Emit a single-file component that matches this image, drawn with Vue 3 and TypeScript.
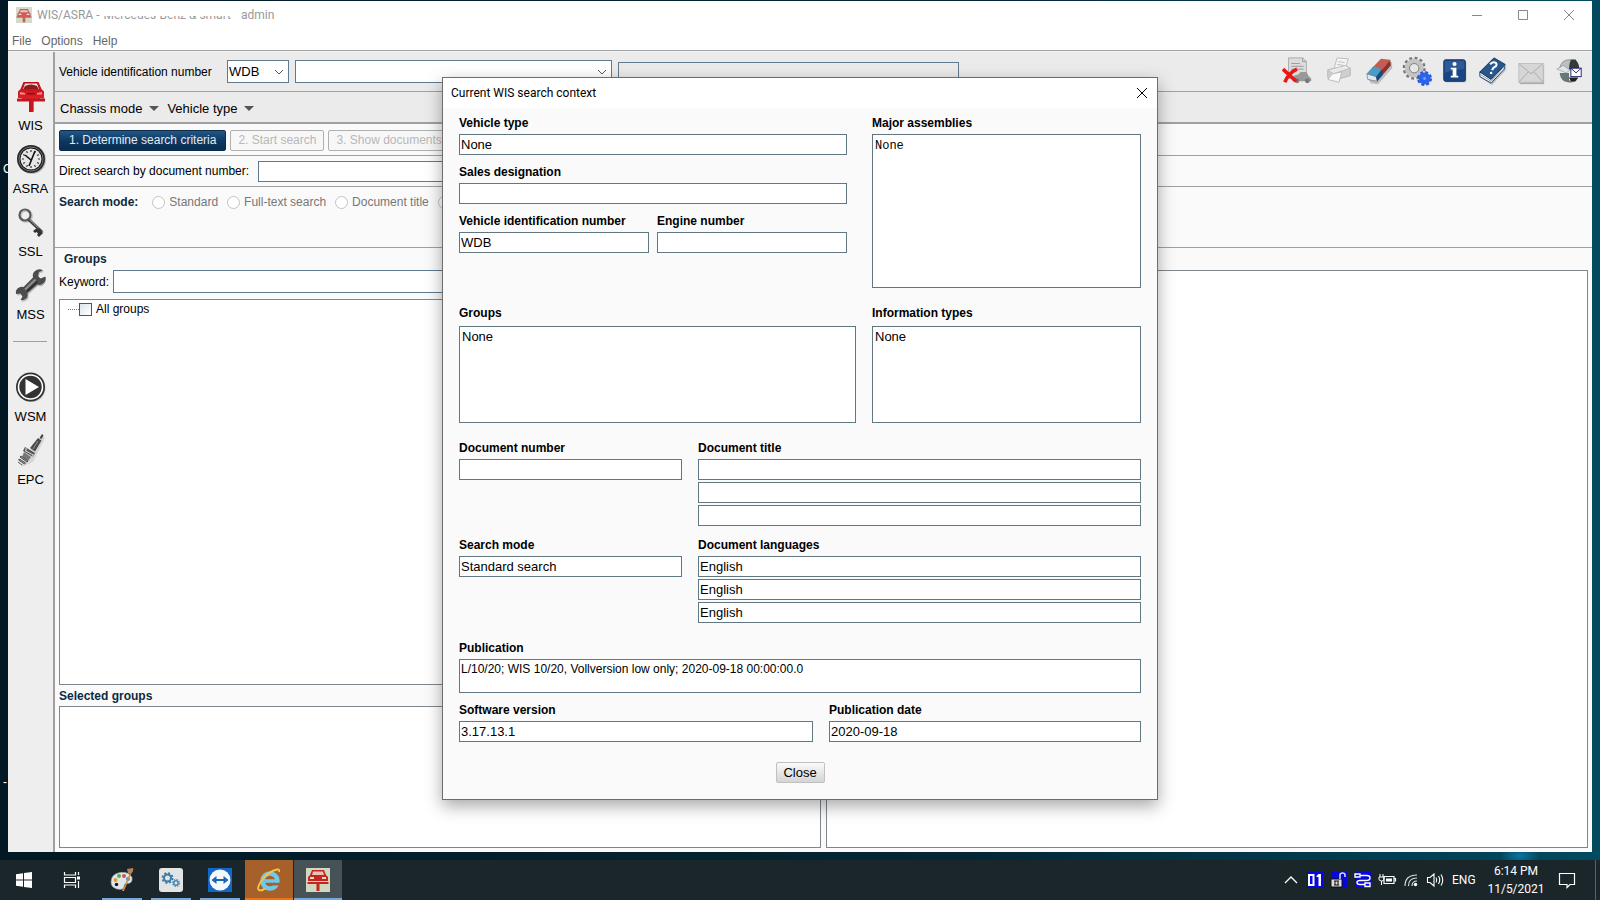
<script setup lang="ts">
import { ref } from 'vue'

const prefix = ref('WDB')
const vin = ref('')
const directSearch = ref('')
const keyword = ref('')
const dialogOpen = ref(true)

const searchModes: string[] = ['Standard', 'Full-text search', 'Document title', 'Document number']
const titles: string[] = ['', '', '']
const languages: string[] = ['English', 'English', 'English']
</script>

<template>
  <div class="desktop">
    <span class="desktop-label">C</span>
    <span class="desktop-label lower">-</span>

    <main class="window">
      <header class="titlebar">
        <svg class="app-icon" viewBox="0 0 24 24" aria-hidden="true">
          <rect width="24" height="24" fill="#cbd3bd" />
          <path d="M6 3h12l2 5 2 2v5H2v-5l2-2z" fill="#c0392f" />
          <path d="M7 5h10l1 3H6z" fill="#e9b9ae" />
          <path d="M1 14h22v2H1zM10 15h4v8h-4z" fill="#c0392f" />
          <path d="M4 10h4v2H4zM16 10h4v2h-4z" fill="#f3d9d0" />
        </svg>
        <span class="title-text">WIS/ASRA -</span>
        <span class="title-text brand">Mercedes-Benz &amp; smart</span>
        <span class="title-text user">admin</span>
        <div class="win-controls">
          <button type="button" aria-label="Minimize"><svg viewBox="0 0 10 10"><path d="M0 5.500h10" /></svg></button>
          <button type="button" aria-label="Maximize"><svg viewBox="0 0 10 10"><path d="M.5 .5h9v9h-9z" /></svg></button>
          <button type="button" aria-label="Close window"><svg viewBox="0 0 10 10"><path d="M0 0l10 10M10 0L0 10" /></svg></button>
        </div>
      </header>
      <nav class="menubar">
        <button type="button">File</button>
        <button type="button">Options</button>
        <button type="button">Help</button>
      </nav>

      <div class="body">
        <aside class="sidebar">
          <button type="button" class="side-item">
            <svg viewBox="0 0 36 36">
              <defs><linearGradient id="carRed" x1="0" y1="0" x2="0" y2="1"><stop offset="0" stop-color="#b50f16" /><stop offset="1" stop-color="#e02128" /></linearGradient></defs>
              <path d="M8 20h24v2h-11v11h-3V22H8z" fill="#bbb" />
              <path d="M10.500 4h15l3 7 2.500 2.500V20h-4v1h-18v-1H5v-6.500L7.500 11z" fill="url(#carRed)" />
              <path d="M12 5.500h12l2 5.500H10z" fill="#f3dadb" />
              <path d="M12 8q6-3 12 0l1.500 3h-15z" fill="#8c1a20" />
              <path d="M7 14l5 1v1.500H7zM29 14l-5 1v1.500h5z" fill="#ff8d8d" />
              <path d="M14 15h8v1.500h-8z" fill="#8c0d12" />
              <path d="M4 20.500h28v3H4zM16 23h4.500v11H16z" fill="#c5161d" />
            </svg>
            <span>WIS</span>
          </button>
          <button type="button" class="side-item">
            <svg viewBox="0 0 36 36">
              <circle cx="19" cy="19" r="14" fill="#bdbdbd" />
              <circle cx="18" cy="18" r="14" fill="#2b2b2b" />
              <circle cx="18" cy="18" r="12" fill="#111" stroke="#777" />
              <circle cx="18" cy="18" r="10.500" fill="#e6e6e6" />
              <path d="M18 9v2M18 25v2M9 18h2M25 18h2M13.500 10.200l1 1.700M22.500 10.200l-1 1.700M13.500 25.800l1-1.700M22.500 25.800l-1-1.700M10.200 13.500l1.700 1M25.800 13.500l-1.700 1M10.200 22.500l1.700-1M25.800 22.500l-1.700-1" stroke="#333" stroke-width="1.200" />
              <path d="M22 10l-6 15M18 19l-6-5" stroke="#111" stroke-width="1.600" fill="none" />
            </svg>
            <span>ASRA</span>
          </button>
          <button type="button" class="side-item">
            <svg viewBox="0 0 36 36">
              <g fill="none" stroke="#c8c8c8" stroke-width="3"><circle cx="13" cy="12" r="5.500" /><path d="M17 16l13 13" /></g>
              <circle cx="12" cy="11" r="5.500" fill="none" stroke="#5a5a5a" stroke-width="2.200" />
              <path d="M8 9q2-3 5-2" stroke="#b0b0b0" fill="none" />
              <path d="M15.500 15.500L29 28" stroke="#444" stroke-width="3" />
              <path d="M24 24l-4 3 2 2 1.500-1 1.500 1.500-1 1.500 2 2 4-4z" fill="#333" />
              <path d="M16.500 15.500l9 8.500" stroke="#999" stroke-width="1" />
            </svg>
            <span>SSL</span>
          </button>
          <button type="button" class="side-item">
            <svg viewBox="0 0 36 36">
              <path d="M31 5l-4 1-1.500 4 2.500 2.500 4.500-1.500q1.500 5-2.500 7.500-2.500 1.500-5 .5L15.500 27.500q1 5-3 6.500-2 1-4 .5l2-3.500-2-3-4.500.5Q3 24 7 22q2-1 4.500-.5L21 12q-1-4 2-6.500Q27 2.500 31 5z" fill="#bcbcbc" />
              <path d="M30 3.500l-4 1.500-1 4 2.500 2.500 5-2q1 5-3 7.500-2.500 1.500-5 .5L14.500 26q1 5-3 6.500-2 1-4 .5l2-3.500-2-3-4.500.5Q2 22.500 6 20.500q2-1 4.500-.5L20 10.500q-1-4 2-6.500Q26 1 30 3.500z" fill="#4c4c4c" />
              <path d="M12 22.500L22.500 12.500" stroke="#8e8e8e" stroke-width="2" />
              <path d="M14 24.500L24.500 14.500" stroke="#2b2b2b" stroke-width="1.500" />
            </svg>
            <span>MSS</span>
          </button>
          <hr />
          <button type="button" class="side-item">
            <svg viewBox="0 0 36 36">
              <circle cx="18.500" cy="19" r="14" fill="#bdbdbd" />
              <circle cx="17.500" cy="18" r="14.500" fill="#333" />
              <circle cx="17.500" cy="18" r="12" fill="#333" stroke="#fff" stroke-width="1.600" />
              <path d="M12.500 10v16L26 18z" fill="#fff" />
            </svg>
            <span>WSM</span>
          </button>
          <button type="button" class="side-item">
            <svg viewBox="0 0 36 36">
              <path d="M30 4l2 2-6 12-6 12-12 5 4-12z" fill="#d5d5d5" />
              <path d="M29 2l1.500 1.500-2 3.500-2-1z" fill="#444" />
              <path d="M25 6l3.500 2.500-6.500 11-5-3.500z" fill="#4a4a4a" />
              <path d="M25 9l-5 8" stroke="#999" />
              <path d="M12 15l10 6-2 4-10-6z" fill="#555" />
              <path d="M12 18.500l8 4.500M13 16v3M20 22v3" stroke="#ddd" />
              <path d="M11 20l7 5-3 4-6-4z" fill="#777" />
              <path d="M8 24l7 5-1 1-7-5zM6.500 27l6 4-1 1-6-4zM5 30l4 3" stroke="#555" fill="#999" />
            </svg>
            <span>EPC</span>
          </button>
        </aside>

        <section class="content">
          <div class="row vin-row">
            <label for="vin-prefix">Vehicle identification number</label>
            <span class="combo prefix">
              <select id="vin-prefix" v-model="prefix"><option>WDB</option></select>
              <svg viewBox="0 0 10 6"><path d="M1 1l4 4 4-4" /></svg>
            </span>
            <span class="combo vin">
              <select v-model="vin" aria-label="Vehicle identification number value"><option value=""></option></select>
              <svg viewBox="0 0 10 6"><path d="M1 1l4 4 4-4" /></svg>
            </span>
            <input class="model" type="text" aria-label="Model" />
            <div class="tools">
              <button type="button" class="wide" aria-label="Delete vehicle data">
                <svg viewBox="0 0 32 32">
                  <path d="M7 2h15l4 4v18H7z" fill="#dcdcdc" stroke="#a9a9a9" />
                  <path d="M22 2v4h4M10 8h9M10 11h13M10 14h13" fill="none" stroke="#999" />
                  <path d="M11 25q1-5 6-5l3-3h6l3 5q3 1 2 5H11z" fill="#999" />
                  <circle cx="16" cy="26.500" r="2.500" fill="#777" /><circle cx="27" cy="26.500" r="2.500" fill="#777" />
                  <path d="M1 14l14 13M16 14Q7 18 3 28" stroke="#ea1515" stroke-width="3.800" fill="none" />
                </svg>
              </button>
              <button type="button" class="wide" aria-label="Print">
                <svg viewBox="0 0 32 32">
                  <path d="M4 15l18-5 6 3v8l-18 5-6-3z" fill="#cfcfcf" stroke="#b5b5b5" />
                  <path d="M11 12l3-10 12 1-3 9-8 3z" fill="#f4f4f4" stroke="#bbb" />
                  <path d="M4 15l19-5 5 3-18 6z" fill="#e9e9e9" stroke="#bbb" />
                  <path d="M9 19l10-2-3 11-12-3z" fill="#f8f8f8" stroke="#bbb" />
                  <path d="M15 6l7 1M14 9l7 1" stroke="#bbb" />
                </svg>
              </button>
              <button type="button" aria-label="Erase">
                <svg viewBox="0 0 32 32">
                  <path d="M5 24L22 5l8 2v6L15 30l-8-1z" fill="#777" opacity=".4" />
                  <path d="M3 19L18 3l10 1-15 18z" fill="#c65b50" />
                  <path d="M28 4l.5 6L14 27l-1-5z" fill="#8f2f29" />
                  <path d="M3 19l7-8 9 3-6 8z" fill="#4c9bc4" />
                  <path d="M3 19l10 3 1 5-10-2z" fill="#d8e9ef" stroke="#557" stroke-width=".6" />
                  <path d="M13 22l6-8 1 6-6 7z" fill="#0d4f86" />
                </svg>
              </button>
              <button type="button" aria-label="Settings">
                <svg viewBox="0 0 32 32">
                  <circle cx="13" cy="13" r="10.500" fill="none" stroke="#777" stroke-width="3.500" stroke-dasharray="3 2.500" />
                  <circle cx="13" cy="13" r="7.500" fill="none" stroke="#c4c4c4" stroke-width="5" />
                  <circle cx="13" cy="13" r="5" fill="#e6e6e6" stroke="#777" />
                  <circle cx="24" cy="24" r="6.500" fill="none" stroke="#2a55d8" stroke-width="3" stroke-dasharray="3 2.100" />
                  <circle cx="24" cy="24" r="4" fill="#7ea0f4" stroke="#2d62ea" stroke-width="5" />
                </svg>
              </button>
              <button type="button" aria-label="Information">
                <svg viewBox="0 0 32 32">
                  <rect x="5" y="5" width="23" height="23" rx="2" fill="#aaa" />
                  <rect x="4" y="4" width="23" height="23" rx="2" fill="#194584" stroke="#103364" />
                  <path d="M5 5h21v9q-10 0-21 4z" fill="#4a72ab" opacity=".45" />
                  <circle cx="15.500" cy="8.500" r="2.200" fill="#fff" />
                  <path d="M11.500 12.500h6V21h2v2h-8v-2h2v-6.500h-2z" fill="#fff" />
                </svg>
              </button>
              <button type="button" aria-label="Help">
                <svg viewBox="0 0 32 32">
                  <path d="M3 19L18 2l12 8v5L15 31 4 24z" fill="#999" opacity=".5" />
                  <path d="M2 17v5l12 7 14-15v-4z" fill="#f4f4f4" stroke="#123a68" />
                  <path d="M2 17L17 2l12 7-15 16z" fill="#28578e" stroke="#0d2f58" />
                  <path d="M3 20l11 7 14-16" fill="none" stroke="#8d9bac" />
                  <path d="M13 9q2-3 5-2t1 4q-3 1-4 4" fill="none" stroke="#fff" stroke-width="2.200" />
                  <circle cx="14" cy="18" r="1.300" fill="#fff" />
                </svg>
              </button>
              <button type="button" aria-label="Mail">
                <svg viewBox="0 0 32 32">
                  <path d="M4 10h26v20H4z" fill="#aaa" />
                  <path d="M3 8h26v20H3z" fill="#d6d6d6" stroke="#c0c0c0" />
                  <path d="M3 8l13 11L29 8M3 28l10-11M29 28L19 17" fill="none" stroke="#aaa" />
                </svg>
              </button>
              <button type="button" aria-label="Send feedback">
                <svg viewBox="0 0 32 32">
                  <path d="M6 13Q8 4 16 4h7l-4 10-8 1z" fill="#b7c1c3" stroke="#666" stroke-width=".6" />
                  <path d="M18 4h5q4 4 4 10H16q0-6 2-10z" fill="#333a3c" />
                  <path d="M3 14l7-4 7 5-4 3z" fill="#e0e6e6" stroke="#888" stroke-width=".6" />
                  <path d="M6 18h10v8h8q-3 3-9 2-8-1-9-10z" fill="#65777b" />
                  <path d="M16 23h10l-3 4h-5z" fill="#222" />
                  <rect x="18" y="13" width="11" height="9" fill="#fff" stroke="#232370" /><path d="M18 13l5.500 5 5.500-5" fill="none" stroke="#232370" />
                </svg>
              </button>
            </div>
          </div>
          <div class="row mode-row">
            <button type="button">Chassis mode <i class="tri"></i></button>
            <button type="button">Vehicle type <i class="tri"></i></button>
          </div>
          <div class="row steps-row">
            <button type="button" class="step primary">1. Determine search criteria</button>
            <button type="button" class="step" disabled>2. Start search</button>
            <button type="button" class="step" disabled>3. Show documents</button>
          </div>
          <div class="row direct-row">
            <label for="direct">Direct search by document number:</label>
            <input id="direct" v-model="directSearch" type="text" />
          </div>
          <div class="row search-row">
            <strong>Search mode:</strong>
            <label v-for="mode in searchModes" :key="mode"><input type="radio" name="mode" disabled />{{ mode }}</label>
          </div>
          <div class="panes">
            <div class="pane">
              <h2 class="groups-title">Groups</h2>
              <div class="keyword">
                <label for="keyword">Keyword:</label>
                <input id="keyword" v-model="keyword" type="text" />
              </div>
              <div class="tree"><label><i></i><input type="checkbox" />All groups</label></div>
              <h2 class="selected-title">Selected groups</h2>
              <div class="selected"></div>
            </div>
            <div class="result"></div>
          </div>
        </section>
      </div>
    </main>

    <div v-if="dialogOpen" class="overlay">
      <section class="dialog" role="dialog" aria-labelledby="dialog-title">
        <header>
          <span id="dialog-title">Current WIS search context</span>
          <button type="button" aria-label="Close dialog" @click="dialogOpen = false"><svg viewBox="0 0 10 10"><path d="M0 0l10 10M10 0L0 10" /></svg></button>
        </header>
        <div class="dialog-body">
          <div class="cols top">
            <div class="stack">
              <div class="field"><label for="d-type">Vehicle type</label><input id="d-type" value="None" readonly /></div>
              <div class="field"><label for="d-sales">Sales designation</label><input id="d-sales" value="" readonly /></div>
              <div class="cols halves">
                <div class="field"><label for="d-vin">Vehicle identification number</label><input id="d-vin" value="WDB" readonly /></div>
                <div class="field"><label for="d-engine">Engine number</label><input id="d-engine" value="" readonly /></div>
              </div>
            </div>
            <div class="field"><label for="d-major">Major assemblies</label><textarea id="d-major" class="major" readonly>None</textarea></div>
          </div>
          <div class="cols lists">
            <div class="field"><label for="d-groups">Groups</label><textarea id="d-groups" readonly>None</textarea></div>
            <div class="field"><label for="d-info">Information types</label><textarea id="d-info" readonly>None</textarea></div>
          </div>
          <div class="cols docs">
            <div class="field"><label for="d-num">Document number</label><input id="d-num" value="" readonly /></div>
            <div class="field"><label for="d-title0">Document title</label><input v-for="(t, i) in titles" :id="'d-title' + i" :key="i" :value="t" aria-label="Document title" readonly /></div>
          </div>
          <div class="cols docs modes">
            <div class="field"><label for="d-mode">Search mode</label><input id="d-mode" value="Standard search" readonly /></div>
            <div class="field"><label for="d-lang0">Document languages</label><input v-for="(l, i) in languages" :id="'d-lang' + i" :key="i" :value="l" aria-label="Document language" readonly /></div>
          </div>
          <div class="field publication"><label for="d-pub">Publication</label><textarea id="d-pub" readonly>L/10/20; WIS 10/20, Vollversion low only; 2020-09-18 00:00:00.0</textarea></div>
          <div class="cols version">
            <div class="field"><label for="d-ver">Software version</label><input id="d-ver" value="3.17.13.1" readonly /></div>
            <div class="field"><label for="d-date">Publication date</label><input id="d-date" value="2020-09-18" readonly /></div>
          </div>
          <button type="button" class="close-btn" @click="dialogOpen = false">Close</button>
        </div>
      </section>
    </div>

    <footer class="taskbar">
      <button type="button" aria-label="Start"><svg viewBox="0 0 24 24"><path d="M4 6.200l7-1v6.300H4zM12 5l8-1v7.500h-8zM4 12.500h7v6.300l-7-1zM12 12.500h8V20l-8-1z" fill="#fff" /></svg></button>
      <button type="button" class="task-view" aria-label="Task view"><svg viewBox="0 0 24 24"><path d="M4.500 4v3h11V4M4.500 20v-3h11v3M4.500 9.500h11v5h-11zM18.500 4v3M18.500 13v7" fill="none" stroke="#fff" stroke-width="1.200" /><path d="M17 8.500h3v3h-3z" fill="#fff" /></svg></button>
      <button type="button" class="app" aria-label="Paint">
        <svg viewBox="0 0 24 24">
          <path d="M1 14Q1 6 10 4.500q9-1 12 5 1 6-5 6-3 0-3 3 0 3-4 3Q1 21 1 14z" fill="#dfe6ea" stroke="#8fa0ab" stroke-width=".6" />
          <circle cx="5.500" cy="12" r="2" fill="#e99a2c" /><circle cx="9" cy="8" r="2" fill="#58a957" /><circle cx="14" cy="8" r="2" fill="#d5544a" /><circle cx="6.500" cy="16.500" r="1.800" fill="#16202c" /><circle cx="18" cy="11" r="2" fill="#4b8fd0" />
          <path d="M20 5l1 1-7 17h-2z" fill="#cf8b42" /><path d="M17 1l6-1q1 3-2 6l-3-1z" fill="#b9805a" />
        </svg>
      </button>
      <button type="button" class="app" aria-label="Services">
        <svg viewBox="0 0 24 24">
          <rect width="24" height="24" rx="3" fill="#e1e3e4" />
          <circle cx="8.500" cy="10" r="3.500" fill="none" stroke="#3d7aa5" stroke-width="2" /><circle cx="8.500" cy="10" r="5" fill="none" stroke="#3d7aa5" stroke-width="1.800" stroke-dasharray="2 1.930" />
          <circle cx="17" cy="15" r="2.200" fill="none" stroke="#4b8ab5" stroke-width="1.500" /><circle cx="17" cy="15" r="3.300" fill="none" stroke="#4b8ab5" stroke-width="1.400" stroke-dasharray="1.400 1.200" />
        </svg>
      </button>
      <button type="button" class="app" aria-label="Remote support">
        <svg viewBox="0 0 24 24">
          <rect width="24" height="24" fill="#1268c4" /><circle cx="12" cy="12" r="10.500" fill="#f4f8fc" />
          <path d="M3.500 12l5-4v3h7V8l5 4-5 4v-3h-7v3z" fill="#1765b3" />
        </svg>
      </button>
      <button type="button" class="app alert" aria-label="Internet Explorer">
        <svg viewBox="0 0 24 24">
          <circle cx="13" cy="13" r="7.500" fill="none" stroke="#6fc9ec" stroke-width="4.500" />
          <path d="M8 13h14" stroke="#6fc9ec" stroke-width="3.500" /><path d="M16 14.800h8v2.700h-8z" fill="#a8602a" />
          <path d="M22 4q1-3-2-2.500Q12 3 5 12-2 22 3.500 22.500q2 0 4.500-2" fill="none" stroke="#f3c64a" stroke-width="1.800" />
        </svg>
      </button>
      <button type="button" class="app active" aria-label="WIS">
        <svg viewBox="0 0 24 24">
          <rect width="24" height="24" fill="#cfd8c0" /><path d="M6 2h12l2 5 2 2v4H2V9l2-2z" fill="#c3261f" />
          <path d="M7 3.500h10l1 3.500H6z" fill="#ecc0b6" /><path d="M1.500 14h21v2h-21zM10.500 15h3v8h-3z" fill="#c3261f" /><path d="M4 9h4v2H4zM16 9h4v2h-4z" fill="#f5d5cc" />
        </svg>
      </button>
      <div class="tray">
        <svg viewBox="0 0 24 24"><path d="M6 15l6-6 6 6" fill="none" stroke="#fff" stroke-width="1.300" /></svg>
        <svg viewBox="0 0 24 24"><rect x="4" y="4" width="16" height="16" fill="#0508d8" /><path d="M6 7h4.500v10H6z" fill="none" stroke="#fff" stroke-width="2" /><path d="M13.500 8l2-2H18v12h-2.500V9h-2z" fill="#fff" /></svg>
        <svg viewBox="0 0 24 24"><rect x="4" y="4" width="16" height="16" fill="#0508d8" /><path d="M4 11h11v8H4z" fill="#ddd" stroke="#111" /><path d="M7 13h5M7 17h5M8 13v4M11 13v4" stroke="#111" /><path d="M13 11V7q0-2 2.500-2T18 7v2" fill="none" stroke="#ddd" stroke-width="1.500" /></svg>
        <svg viewBox="0 0 24 24"><rect x="4" y="4" width="16" height="16" fill="#0508d8" /><path d="M4 6h5v3H4zM9 7.500h7q3 0 3 2.500t-4 2.500H9q-3 0-3 2t3 2h5M14 15h5v3.500h-5z" fill="none" stroke="#fff" stroke-width="1.400" /></svg>
        <svg viewBox="0 0 24 24"><path d="M9 8.500h10v7H9zM19.500 10.500h1v3" fill="none" stroke="#fff" stroke-width="1.200" /><path d="M11 10.500h6v3h-6z" fill="#fff" /><path d="M4 9h5v2q0 2-2.500 2T4 11zM5 6v3M8 6v3M6.500 13v4" fill="none" stroke="#fff" /></svg>
        <svg viewBox="0 0 24 24"><path d="M6 18Q6 7 18 7M9.500 18q0-8 8.500-8M13 18q0-5 5-5" fill="none" stroke="#d8dcdd" stroke-width="1.200" /><circle cx="16.500" cy="16.500" r="1.700" fill="#fff" /></svg>
        <svg viewBox="0 0 24 24"><path d="M4.500 9.500h2.500l4-3.500v12l-4-3.500H4.500zM13 9.500q1.500 2.500 0 5M15.500 8q2.500 4 0 8M18 6.500q3.500 5.500 0 11" fill="none" stroke="#fff" stroke-width="1.100" /></svg>
        <span class="lang">ENG</span>
        <div class="clock"><span>6:14 PM</span><span>11/5/2021</span></div>
        <button type="button" class="notify" aria-label="Notifications"><svg viewBox="0 0 18 18"><path d="M1.500 2.500h15v11H12l-3 3v-3H1.500z" fill="none" stroke="#fff" stroke-width="1.200" /></svg></button>
      </div>
    </footer>
  </div>
</template>

<style>
html, body { margin: 0; }
</style>

<style scoped>
.desktop, .desktop * { box-sizing: border-box; }
.desktop {
  position: relative;
  display: flex;
  flex-direction: column;
  height: 100vh;
  overflow: hidden;
  font-family: "Liberation Sans", Arial, sans-serif;
  font-size: 12px;
  color: #000;
  background:
    radial-gradient(ellipse 20px 10px at 95% 856px, #0a74a0, transparent),
    linear-gradient(90deg, #021824 0%, #042635 60%, #024a60 100%);
}
button, input, select, textarea { font: inherit; color: inherit; margin: 0; border-radius: 0; outline: 0; }
button { padding: 0; border: 0; background: none; }
svg { display: block; }
.desktop-label { position: absolute; left: 3px; top: 162px; color: #fff; }
.desktop-label.lower { top: 775px; }

.window { position: relative; flex: 1; min-height: 0; display: flex; flex-direction: column; margin: 1px 8px 8px; background: #fff; }
.titlebar { display: flex; align-items: center; height: 28px; padding-left: 8px; font-family: Roboto, "Noto Sans", sans-serif; color: #999; }
.app-icon { width: 16px; height: 16px; margin-right: 5px; opacity: .8; }
.title-text { white-space: pre; }
.brand { position: relative; margin-left: 4px; }
.brand::after { content: ""; position: absolute; inset: 0 0 6px; background: #fff; }
.user { margin-left: 10px; }
.win-controls { display: flex; margin-left: auto; }
.win-controls button { width: 46px; height: 28px; display: grid; place-items: center; }
.win-controls svg { width: 10px; height: 10px; overflow: visible; fill: none; stroke: #888; }
.menubar { display: flex; gap: 10px; height: 22px; padding: 2px 4px 0; border-bottom: 1px solid #a0a0a0; color: #666; }

.body { flex: 1; min-height: 0; display: flex; border-top: 1px solid #f4f4f4; }
.sidebar { width: 47px; flex: none; padding-top: 26px; border-right: 2px solid #a0a0a0; background: #eee; }
.side-item { display: block; width: 100%; height: 63px; font-size: 13px; line-height: 24px; }
.side-item svg { width: 36px; height: 36px; margin: 0 auto; }
.side-item span { display: block; height: 27px; }
.sidebar hr { margin: 11px 6px 27px 5px; border: 0; border-top: 1px solid #a0a0a0; }

.content { flex: 1; min-width: 0; display: flex; flex-direction: column; background: #fafafa; }
.row { display: flex; align-items: center; flex: none; padding: 0 4px; border-bottom: 1px solid #a0a0a0; white-space: nowrap; }
input[type="text"], select { border: 1px solid #5f7a8f; background: #fff; padding: 0 2px; }
.vin-row { height: 40px; background: #ebebeb; }
.vin-row label { width: 168px; }
.combo { position: relative; height: 23px; margin-right: 6px; }
.combo select { width: 100%; height: 100%; padding: 0 1px; appearance: none; font-size: 13px; }
.combo svg { position: absolute; right: 5px; top: 9px; width: 10px; height: 6px; fill: none; stroke: #555; pointer-events: none; }
.prefix { width: 62px; }
.vin { width: 317px; }
.model { width: 341px; height: 20px; background: #ebebeb !important; }
.tools { display: flex; margin-left: auto; }
.tools button { width: 38px; height: 32px; display: grid; place-items: start center; }
.tools .wide { width: 42px; }
.tools svg { width: 30px; height: 30px; }
.mode-row { gap: 8px; height: 32px; padding: 2px 5px 0; border-bottom-width: 2px; background: #ebebeb; font-size: 13px; }
.mode-row button { display: flex; align-items: center; gap: 7px; }
.tri { width: 9px; border: 5px solid transparent; border-top-color: #555; border-bottom: 0; }
.steps-row { gap: 4px; height: 32px; padding-top: 1px; }
.step { height: 21px; padding: 0 7px; border: 1px solid #b0b0b0; border-radius: 2px; color: #b8b8b8; background: #f7f7f7; }
.step.primary { padding: 0 9px; border-color: #0b2c4e; color: #e0ebf4; background: linear-gradient(#235683, #0c3762 55%, #0a2d52); }
.direct-row { gap: 9px; height: 31px; }
.direct-row input { width: 330px; height: 21px; }
.search-row { align-items: flex-start; gap: 9px; height: 61px; padding-top: 8px; color: #777; }
.search-row strong { margin-right: 5px; color: #0d2a40; }
.search-row label { display: flex; align-items: center; gap: 4px; }
.search-row input { appearance: none; width: 13px; height: 13px; border: 1px solid #c4c4c4; border-radius: 50%; background: #fff; }
.panes { flex: 1; min-height: 0; display: grid; grid-template-columns: 1fr 1fr; gap: 5px; padding: 0 4px 4px; }
.pane { min-height: 0; display: flex; flex-direction: column; }
h2 { margin: 0; font-size: 12px; color: #0d2a40; }
.groups-title { height: 22px; padding-left: 5px; line-height: 22px; }
.keyword { display: flex; align-items: center; gap: 4px; height: 23px; margin-bottom: 6px; }
.keyword input { flex: 1; height: 23px; }
.tree { flex: 1; padding: 1px 8px; border: 1px solid #7f878d; background: #fff; }
.tree label { display: flex; align-items: center; line-height: 16px; }
.tree i { width: 11px; border-top: 1px dotted #777; }
.tree input { appearance: none; width: 13px; height: 13px; margin-right: 4px; border: 1px solid #3f5a6c; background: linear-gradient(135deg, #dfe5ea, #fff); }
.selected-title { height: 21px; line-height: 22px; }
.selected { height: 142px; border: 1px solid #7f878d; background: #fff; }
.result { margin-top: 22px; border: 1px solid #7f878d; background: #fff; }

.overlay { position: absolute; inset: 77px 0 0; display: flex; justify-content: center; align-items: flex-start; pointer-events: none; }
.dialog { width: 716px; border: 1px solid #6d6d6d; background: #fafafa; box-shadow: 0 6px 16px rgba(0, 0, 0, .35); pointer-events: auto; }
.dialog header { display: flex; justify-content: space-between; align-items: center; height: 30px; padding: 0 10px 0 8px; background: #fff; font-family: Roboto, "Noto Sans", sans-serif; }
.dialog header svg { width: 10px; height: 10px; overflow: visible; fill: none; stroke: #000; }
.dialog-body { padding: 7px 16px 16px; font-size: 13px; }
.cols { display: grid; column-gap: 16px; }
.field { display: flex; flex-direction: column; min-width: 0; }
.field label { height: 19px; line-height: 16px; font-weight: bold; font-size: 12px; white-space: nowrap; }
.field input { width: 100%; height: 21px; padding: 0 1px; border: 1px solid #617883; background: #fff; }
.field input + input { margin-top: 2px; }
.field textarea { width: 100%; height: 97px; padding: 2px; border: 1px solid #617883; background: #fff; resize: none; overflow: hidden; line-height: 15px; }
.field .major { height: 154px; padding-top: 4px; font-family: "Liberation Mono", monospace; font-size: 12px; }
.top { grid-template-columns: 388fr 269fr; column-gap: 25px; margin-bottom: 17px; }
.stack { display: flex; flex-direction: column; gap: 9px; }
.halves { grid-template-columns: 1fr 1fr; column-gap: 8px; }
.lists { grid-template-columns: 397fr 269fr; margin-bottom: 17px; }
.lists .field label { height: 21px; }
.docs { grid-template-columns: 223fr 443fr; margin-bottom: 11px; }
.docs.modes { margin-bottom: 17px; }
.field.publication { margin-bottom: 9px; }
.field.publication textarea { height: 34px; padding: 2px 1px; font-size: 12px; }
.version { grid-template-columns: 354fr 312fr; margin-bottom: 20px; }
.close-btn { display: block; width: 49px; height: 21px; margin: 0 auto; border: 1px solid #c0c0c0; border-radius: 2px; background: linear-gradient(#fafafa, #d4d4d4); }

.taskbar { position: relative; flex: none; display: flex; height: 40px; background: #1b262b; color: #fff; font-family: Roboto, "Noto Sans", sans-serif; }
.taskbar button { width: 48px; height: 40px; display: grid; place-items: center; }
.taskbar button svg { width: 24px; height: 24px; }
.taskbar .task-view { margin-right: 1px; }
.taskbar .app { margin-left: 1px; background: linear-gradient(#76a9dc, #76a9dc) center bottom / 40px 2px no-repeat; }
.taskbar .alert { background: linear-gradient(#f07414, #f07414) bottom / 100% 2px no-repeat #a8602a; }
.taskbar .active { background: linear-gradient(#76a9dc, #76a9dc) bottom / 100% 2px no-repeat #465255; }
.tray { display: flex; align-items: center; margin: 0 4px 0 auto; padding-right: 5px; border-right: 1px solid #586165; }
.tray > svg { width: 24px; height: 24px; }
.lang { width: 26px; margin-left: 5px; }
.clock { width: 76px; display: flex; flex-direction: column; align-items: center; line-height: 18px; }
.tray .notify { width: 46px; margin-left: -10px; }
.tray .notify svg { width: 18px; height: 18px; }
</style>
